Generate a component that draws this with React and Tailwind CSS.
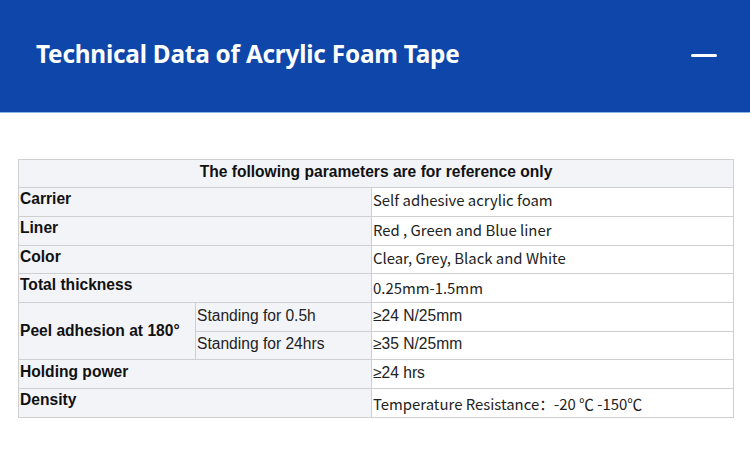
import React from 'react';

const yahei = "font-['Noto_Sans_CJK_SC','Noto_Sans',sans-serif]";
const arial = "font-['Liberation_Sans',Arial,sans-serif]";

function Label({ children, className = '' }) {
  return (
    <td colSpan={2} className={`border border-[#cfcfcf] bg-[#f3f4f8] px-[1px] pt-[1px] align-top text-[15.6px] font-bold text-[#111] ${arial} ${className}`}>
      {children}
    </td>
  );
}

function Value({ children, font = yahei, className = '' }) {
  return (
    <td className={`border border-[#cfcfcf] bg-white px-[1px] align-middle text-[14.9px] text-[#222] ${font} ${className}`}>
      {children}
    </td>
  );
}

export default function App() {
  return (
    <div className="w-[750px] h-[474px] bg-white overflow-hidden">
      {/* Section header */}
      <div className="h-[113px] bg-[#0e46aa] border-b border-[#8fb3e6] flex items-center justify-between pl-[36px] pr-[33px]">
        <h2 className="text-white text-[24.3px] font-bold tracking-[-0.2px] font-['Noto_Sans','Open_Sans',sans-serif] pb-[4px]">
          Technical Data of Acrylic Foam Tape
        </h2>
        <span className="block w-[26px] h-[3px] bg-white rounded-sm mb-[2px]" />
      </div>

      {/* Data table */}
      <div className="pt-[46px] pl-[18px]">
        <table className="w-[715px] border-collapse table-fixed leading-[1.25]">
          <colgroup>
            <col className="w-[177px]" />
            <col className="w-[176px]" />
            <col className="w-[362px]" />
          </colgroup>
          <tbody>
            <tr className="h-[28px]">
              <td colSpan={3} className={`border border-[#cfcfcf] bg-[#f3f4f8] pb-[3px] text-center text-[15.6px] font-bold text-[#111] ${arial}`}>
                The following parameters are for reference only
              </td>
            </tr>
            <tr className="h-[29px]">
              <Label>Carrier</Label>
              <Value className="pb-[4px]">Self adhesive acrylic foam</Value>
            </tr>
            <tr className="h-[29px]">
              <Label>Liner</Label>
              <Value className="pb-[1px]">Red , Green and Blue liner</Value>
            </tr>
            <tr className="h-[28px]">
              <Label>Color</Label>
              <Value className="pb-[2px]">Clear, Grey, Black and White</Value>
            </tr>
            <tr className="h-[29px]">
              <Label>Total thickness</Label>
              <Value className="pt-[1px]">0.25mm-1.5mm</Value>
            </tr>
            <tr className="h-[29px]">
              <td rowSpan={2} className={`border border-[#cfcfcf] bg-[#f3f4f8] px-[1px] align-middle text-[15.6px] font-bold text-[#111] ${arial}`}>
                Peel adhesion at 180°
              </td>
              <td className={`border border-[#cfcfcf] bg-[#f3f4f8] px-[1px] pb-[3px] align-middle text-[15.6px] text-[#222] ${arial}`}>
                Standing for 0.5h
              </td>
              <Value font={arial} className="text-[15.6px] pb-[3px]">≥24 N/25mm</Value>
            </tr>
            <tr className="h-[28px]">
              <td className={`border border-[#cfcfcf] bg-[#f3f4f8] px-[1px] pb-[3px] align-middle text-[15.6px] text-[#222] ${arial}`}>
                Standing for 24hrs
              </td>
              <Value font={arial} className="text-[15.6px] pb-[3px]">≥35 N/25mm</Value>
            </tr>
            <tr className="h-[29px]">
              <Label className="pt-[2px]">Holding power</Label>
              <Value font={arial} className="text-[15.6px] pb-[3px]">≥24 hrs</Value>
            </tr>
            <tr className="h-[29px]">
              <Label>Density</Label>
              <Value className="pt-[3px]">Temperature Resistance：-20 ℃ -150℃</Value>
            </tr>
          </tbody>
        </table>
      </div>
    </div>
  );
}
